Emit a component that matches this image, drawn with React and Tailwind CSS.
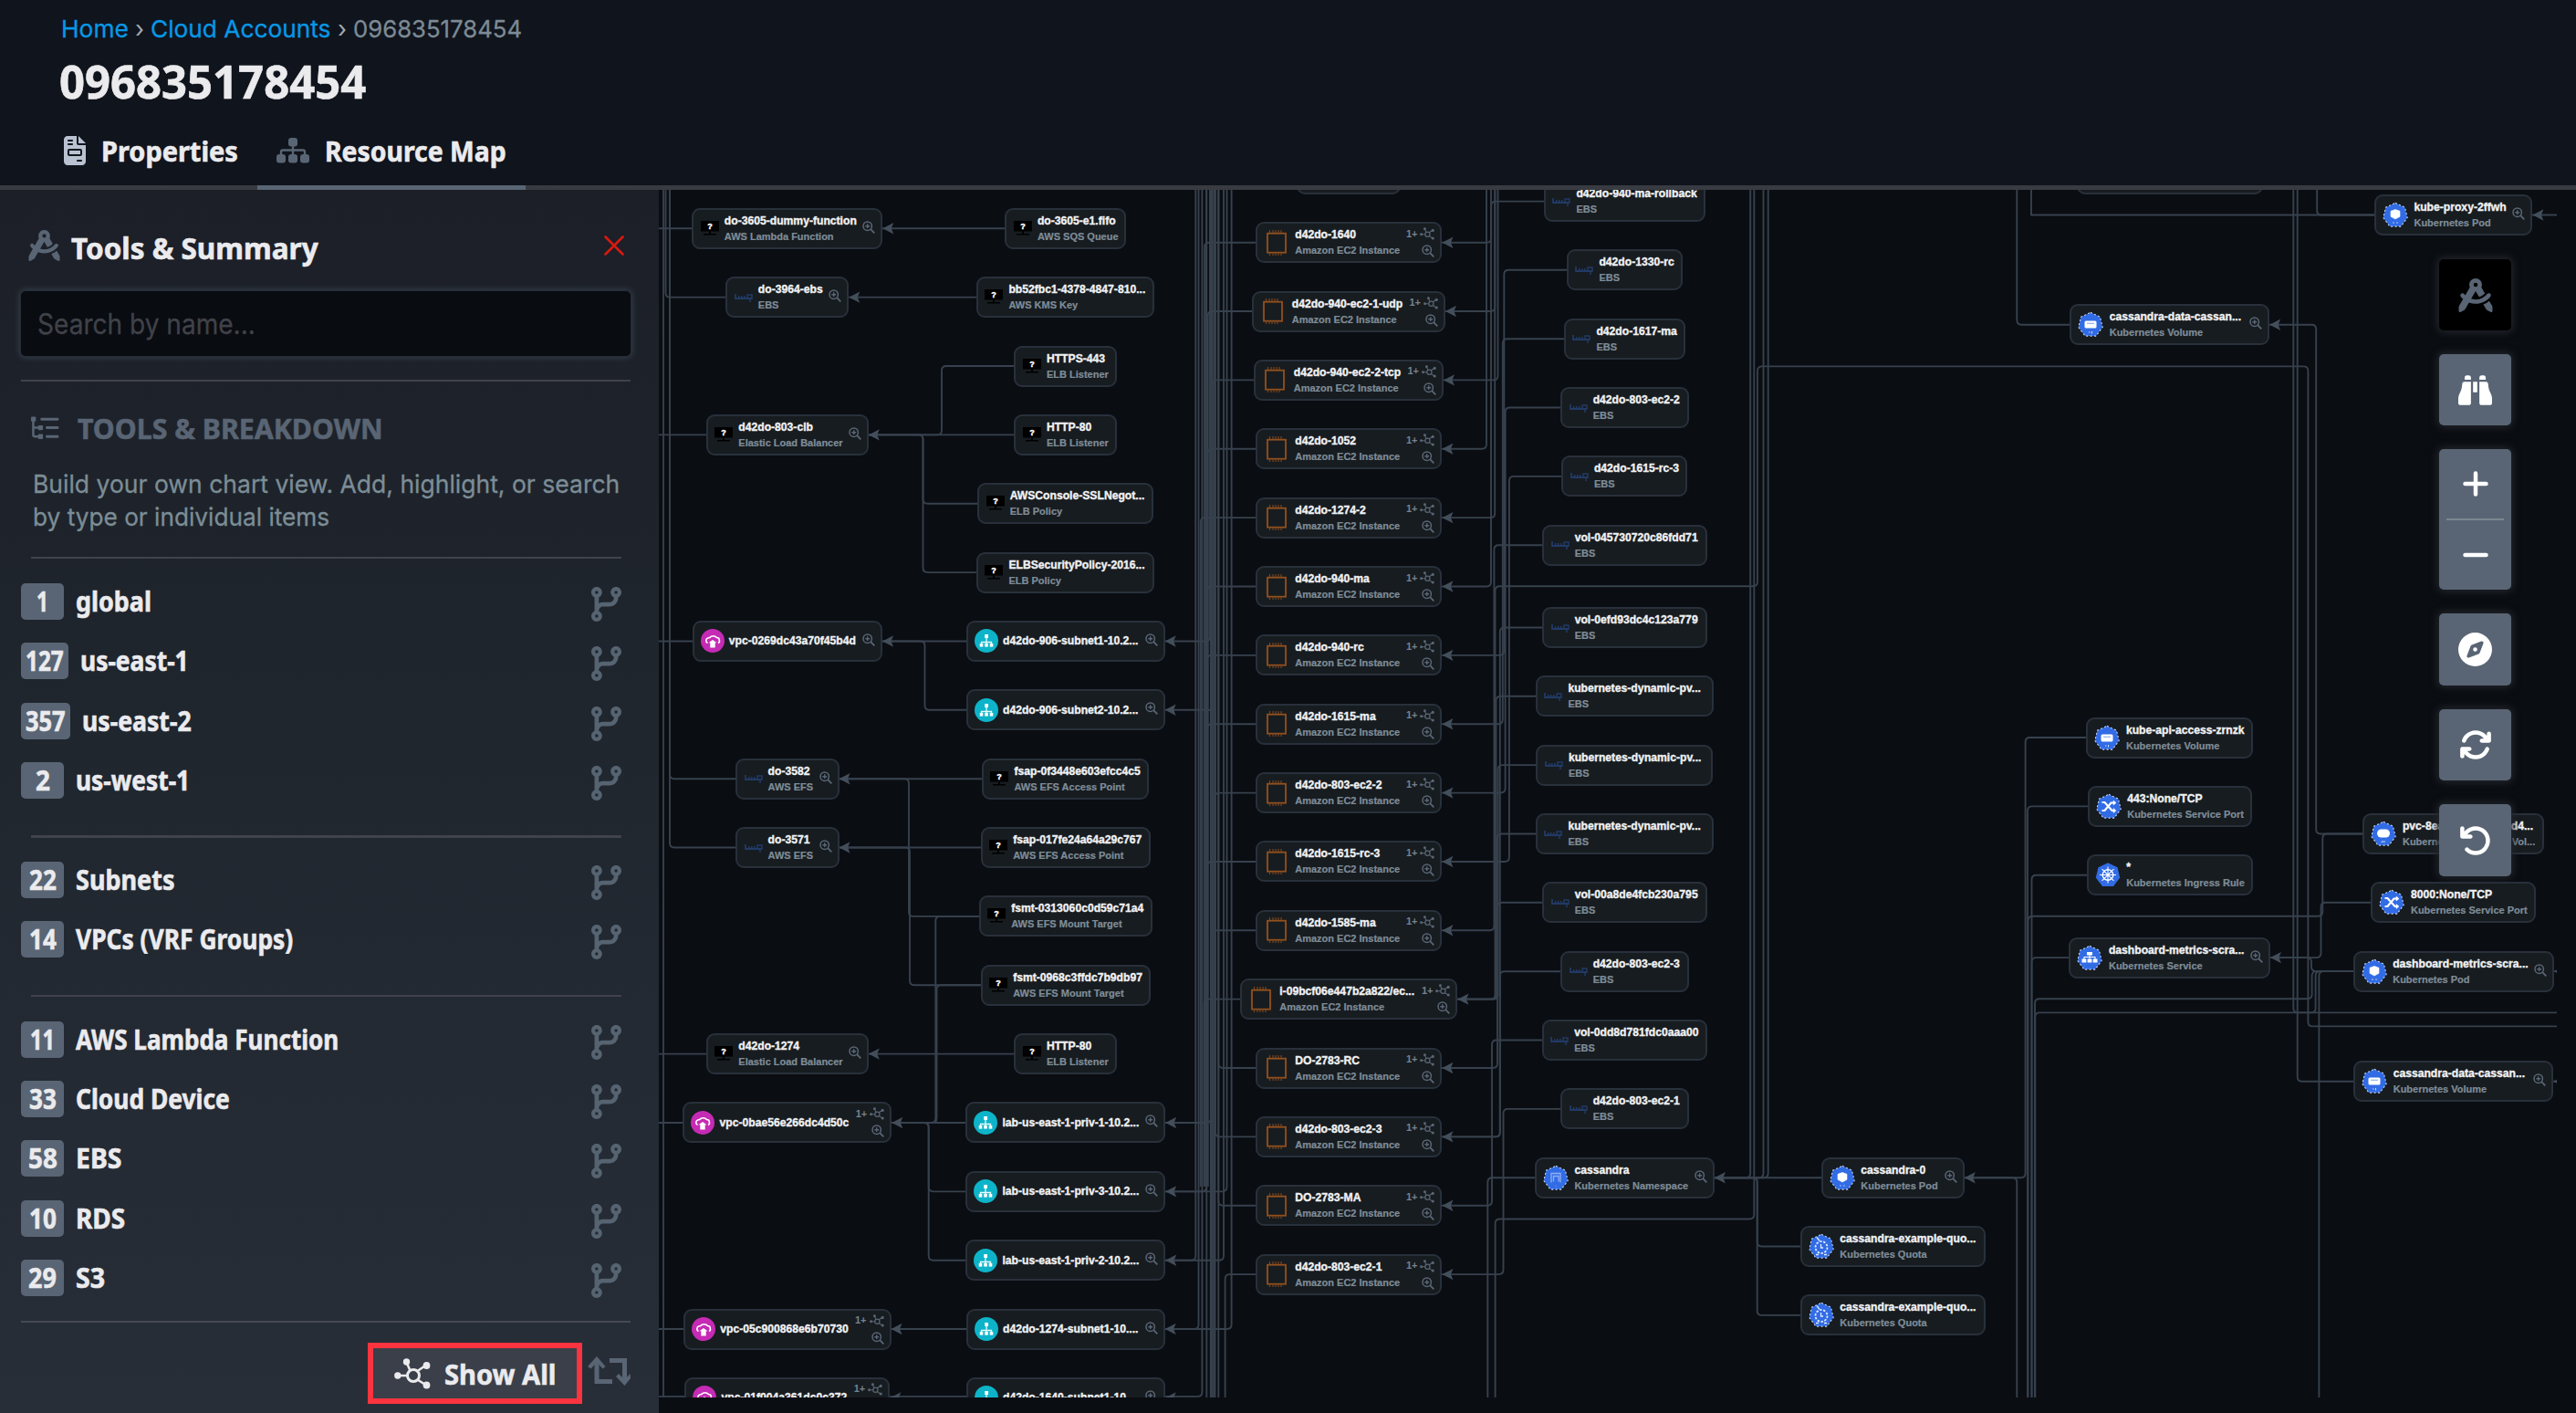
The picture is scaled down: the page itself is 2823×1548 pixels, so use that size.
import React, { useLayoutEffect, useRef } from "react";
import {
  FaCompassDrafting,
  FaBinoculars,
  FaCompass,
  FaArrowsRotate,
  FaArrowRotateLeft,
  FaCodeBranch,
  FaFileInvoice,
} from "react-icons/fa6";

/* Text squeezed or stretched horizontally to an exact width. */
function Fit({ w, className = "", children }) {
  const ref = useRef(null);
  useLayoutEffect(() => {
    const el = ref.current;
    el.style.transform = `scaleX(${w / el.offsetWidth})`;
  }, [w]);
  return (
    <span className="block shrink-0" style={{ width: w }}>
      <span ref={ref} className={`inline-block origin-left whitespace-nowrap ${className}`}>
        {children}
      </span>
    </span>
  );
}

/* ---------- panel icons ---------- */
const HubIcon = ({ className }) => (
  <svg viewBox="0 0 40 34" className={className} fill="currentColor" stroke="currentColor">
    <circle cx="21" cy="19" r="6.500" fill="none" strokeWidth="3" />
    <g strokeWidth="2.600">
      <path d="M14.500 19H4M17.500 13.500L13.500 4.500M25.500 14L35 7.500M25.500 23.500L35 29.500" />
    </g>
    <g stroke="none">
      <circle cx="3.800" cy="19" r="3.700" />
      <circle cx="13.500" cy="4" r="3.700" />
      <circle cx="35.500" cy="8" r="3.900" />
      <circle cx="35.500" cy="29.500" r="3.900" />
    </g>
  </svg>
);

const SitemapIcon = ({ className }) => (
  <svg viewBox="0 0 36 28" className={className} fill="currentColor">
    <rect x="13" y="0" width="10" height="9.500" rx="3" />
    <rect x="0" y="18" width="10" height="9.500" rx="3" />
    <rect x="13" y="18" width="10" height="9.500" rx="3" />
    <rect x="26" y="18" width="10" height="9.500" rx="3" />
    <path d="M18 8v11M5 19v-3.500a2 2 0 0 1 2-2h22a2 2 0 0 1 2 2V19" fill="none" stroke="currentColor" strokeWidth="2.400" />
  </svg>
);

const TreeListIcon = ({ className }) => (
  <svg viewBox="0 0 32 26" className={className} fill="none" stroke="currentColor" strokeWidth="2.600" strokeLinecap="round">
    <path d="M2.500 3v17.500a2 2 0 0 0 2 2H9M2.500 12.500H9" />
    <path d="M12 3h18M18 12.500h12M18 22.500h12" strokeWidth="3" />
    <g fill="currentColor" stroke="none">
      <rect x="0" y="0" width="5.500" height="5.500" rx="1" />
      <rect x="8" y="9.800" width="5.500" height="5.500" rx="1" />
      <rect x="8" y="19.800" width="5.500" height="5.500" rx="1" />
    </g>
  </svg>
);

const SwapIcon = ({ className }) => (
  <svg viewBox="0 0 47 32" className={className}>
    <path d="M10 3v24.500H27M24 4.500H40.500V28" fill="none" stroke="currentColor" strokeWidth="5" />
    <path d="M10 0L19.500 11L16.500 13.500L10 6.500L3.500 13.500L0 11zM40.500 32L31 22L34 19L40.500 25.500L46.500 19L47 24z" fill="currentColor" />
  </svg>
);

/* ---------- node icons ---------- */
const UnknownIcon = () => (
  <svg viewBox="0 0 20 17" className="h-[17px] w-[20px]">
    <rect x="0" y="0" width="20" height="11.500" fill="#000" />
    <rect x="9" y="11" width="2" height="3" fill="#000" />
    <rect x="3" y="14" width="14" height="1.500" fill="#000" />
    <text x="10" y="9" fontSize="9" fontWeight="700" fontFamily="Liberation Sans, sans-serif" textAnchor="middle" fill="#fff" stroke="#fff" strokeWidth=".4">?</text>
  </svg>
);
const VolumeIcon = () => (
  <svg viewBox="0 0 20 12" className="h-[12px] w-[20px]" fill="none" stroke="#213a66" strokeWidth="1.800">
    <path d="M1 2v5h18" />
    <path d="M4 5h9" strokeDasharray="1.500 1.500" />
    <path d="M14 6V3h5v5M17 8v3" strokeWidth="1.500" />
  </svg>
);
const ChipIcon = () => (
  <svg viewBox="0 0 24 28" className="h-[28px] w-[24px]" fill="none">
    <rect x="2" y="3.700" width="20" height="21" stroke="#92501d" strokeWidth="1.800" />
    <path d="M4.500 0v3M8 0v3M11 0v3M14 0v3M17 0v3M4.500 25.500v2.500M8 25.500v2.500M11 25.500v2.500M14 25.500v2.500M17 25.500v2.500" stroke="#7a4520" strokeWidth="1.200" />
    <path d="M0 7v15M24 7v15" stroke="#40281a" strokeWidth="1" strokeDasharray="1.500 1.500" />
  </svg>
);
const VpcIcon = () => (
  <svg viewBox="0 0 26 26" className="h-[26px] w-[26px]">
    <circle cx="13" cy="13" r="13" fill="#c52bb4" />
    <path d="M7.500 15.500a3 3 0 0 1 .2-5.500q1.200-.6 2-.4A5 5 0 0 1 17.500 9.500q3 .2 2.800 3 .8 2-1.300 3" fill="none" stroke="#fff" strokeWidth="1.600" />
    <path d="M13 12l4.500 3.200h-1.800V20.500h-5.400V15.200H8.500z" fill="#fff" />
  </svg>
);
const SubnetIcon = () => (
  <svg viewBox="0 0 26 26" className="h-[26px] w-[26px]">
    <circle cx="13" cy="13" r="13" fill="#0db4c9" />
    <path d="M13 9v6M7.500 18v-3.500h11V18M13 14v4" fill="none" stroke="#e6fbfd" strokeWidth="1.300" />
    <g fill="#fff">
      <rect x="11.200" y="6" width="3.800" height="4" />
      <rect x="5.700" y="16" width="3.600" height="3.600" />
      <rect x="11.200" y="16" width="3.600" height="3.600" />
      <rect x="16.700" y="16" width="3.600" height="3.600" />
    </g>
  </svg>
);
const GLYPHS = {
  pod: <path d="M14 8l5 1.800v6L14 18.500 9 15.800v-6zM11 22.500h2M15 22.500h2" fill="#fff" stroke="#fff" strokeWidth=".6" />,
  vol: (
    <g>
      <rect x="7.500" y="10" width="13" height="8" rx="1.500" fill="#fff" />
      <path d="M10 12.800h8" stroke="#8fb0f2" strokeWidth="1.200" />
      <path d="M12 22.500h1.500M15.500 21.500v2.500" stroke="#c9d9fa" />
    </g>
  ),
  pv: (
    <g>
      <rect x="7" y="9" width="14" height="9" rx="4.500" fill="#fff" />
      <path d="M12 23.500v-1h4" stroke="#c9d9fa" fill="none" />
    </g>
  ),
  ns: <path d="M9 19V9h10v10M11.500 18v-6h5.500v6M14 23h.5" stroke="#8fb0f2" strokeWidth="1.300" fill="none" />,
  port: (
    <g stroke="#fff" strokeWidth="2.200" fill="none">
      <path d="M6.500 9.500h3l8 9h3M6.500 18.500h3l7-8.500h4" />
      <path d="M19 7.500l3 2.500-3 2.500zM19 16l3 2.500-3 2.500z" fill="#fff" strokeWidth=".5" />
    </g>
  ),
  ingress: (
    <g stroke="#fff" strokeWidth="1.400" fill="none">
      <circle cx="14" cy="14" r="5.800" />
      <path d="M14 5v18M5 14h18M7.600 7.600l12.800 12.800M20.400 7.600L7.600 20.400" strokeWidth="1.100" />
    </g>
  ),
  svc: (
    <g fill="#fff">
      <rect x="11" y="7.500" width="6" height="3.500" />
      <rect x="5.500" y="15" width="4.800" height="4" />
      <rect x="11.600" y="15" width="4.800" height="4" />
      <rect x="17.700" y="15" width="4.800" height="4" />
      <path d="M14 10v5M8 15.500V13h12v2.500" stroke="#fff" strokeWidth="1.100" fill="none" />
    </g>
  ),
  quota: (
    <g stroke="#dfe9fd" fill="none">
      <circle cx="14" cy="15" r="6.500" strokeWidth="1.800" strokeDasharray="2.400 1.600" />
      <path d="M13.500 11.500v4h2.500M9 4l3 4M8 23h3M17 23h3" strokeWidth="1.300" />
    </g>
  ),
};
const KubeIcon = ({ kind }) => (
  <svg viewBox="0 0 28 28" className="h-[29px] w-[28px]">
    <path d="M14 .8L24.500 5.700L27.200 17L20 26.600H8L.8 17L3.500 5.700z" fill="#326ce5" />
    {kind !== "ingress" && (
      <path d="M14 .8L24.500 5.700L27.200 17L20 26.600H8L.8 17L3.500 5.700z" fill="none" stroke="#c6d5f2" strokeWidth="1.100" strokeDasharray="2 2.400" />
    )}
    {GLYPHS[kind]}
  </svg>
);
const MagIcon = () => (
  <svg viewBox="0 0 14 14" className="h-[14px] w-[14px]" fill="none" stroke="#5a6675">
    <circle cx="5.700" cy="5.700" r="4.700" strokeWidth="1.500" />
    <path d="M9.200 9.200L13.300 13.300" strokeWidth="1.800" />
    <path d="M5.700 3.300v4.800M3.300 5.700h4.800" strokeWidth="1.400" />
  </svg>
);

/* icon type -> [icon left, text left] inside the node */
const OFFSETS = { q: [9.500, 35.500], e: [9.500, 35.500], c: [11, 43.300], v: [9, 40.300], s: [9, 40.300], k: [9, 43.500] };

function NodeIcon({ type, kind }) {
  if (type === "q") return <UnknownIcon />;
  if (type === "e") return <VolumeIcon />;
  if (type === "c") return <ChipIcon />;
  if (type === "v") return <VpcIcon />;
  if (type === "s") return <SubnetIcon />;
  return <KubeIcon kind={kind} />;
}

const X0 = 722;
const Y0 = 208;
const A = 862.8;
const B = 1167.7;
const C = 1478.2;
const D = 1780.4;
const E = 2074.3;
const F = 2377.7;
const G = 2688.7;
const row = (y, k) => y + 75.36 * k;
const a = (k) => row(250.3, k);
const c = (k) => row(265.7, k);

/* [centre x, centre y, width, icon, name, type label, extras] */
const EC2 = "Amazon EC2 Instance";
const nodes = [
  [A, a(0), 209, "q", "do-3605-dummy-function", "AWS Lambda Function", "m"],
  [A, a(1), 135, "e", "do-3964-ebs", "EBS", "m"],
  [A, a(3), 178, "q", "d42do-803-clb", "Elastic Load Balancer", "m"],
  [A, a(6), 208.5, "v", "vpc-0269dc43a70f45b4d", "", "m"],
  [A, a(8), 113.5, "e", "do-3582", "AWS EFS", "m"],
  [A, a(9), 113.5, "e", "do-3571", "AWS EFS", "m"],
  [A, a(12), 178, "q", "d42do-1274", "Elastic Load Balancer", "m"],
  [A, a(13), 229, "v", "vpc-0bae56e266dc4d50c", "", "p"],
  [A, a(16), 227.5, "v", "vpc-05c900868e6b70730", "", "p"],
  [A, a(17), 225, "v", "vpc-01f004a361dc0c372", "", "p"],

  [B, a(0), 132.5, "q", "do-3605-e1.fifo", "AWS SQS Queue"],
  [B, a(1), 195.5, "q", "bb52fbc1-4378-4847-810...", "AWS KMS Key"],
  [B, a(2), 112.5, "q", "HTTPS-443", "ELB Listener"],
  [B, a(3), 112.5, "q", "HTTP-80", "ELB Listener"],
  [B, a(4), 193, "q", "AWSConsole-SSLNegot...", "ELB Policy"],
  [B, a(5), 195.5, "q", "ELBSecurityPolicy-2016...", "ELB Policy"],
  [B, a(6), 218, "s", "d42do-906-subnet1-10.2...", "", "m"],
  [B, a(7), 218, "s", "d42do-906-subnet2-10.2...", "", "m"],
  [B, a(8), 183.5, "q", "fsap-0f3448e603efcc4c5", "AWS EFS Access Point"],
  [B, a(9), 186, "q", "fsap-017fe24a64a29c767", "AWS EFS Access Point"],
  [B, a(10), 190, "q", "fsmt-0313060c0d59c71a4", "AWS EFS Mount Target"],
  [B, a(11), 186, "q", "fsmt-0968c3ffdc7b9db97", "AWS EFS Mount Target"],
  [B, a(12), 112.5, "q", "HTTP-80", "ELB Listener"],
  [B, a(13), 219, "s", "lab-us-east-1-priv-1-10.2...", "", "m"],
  [B, a(14), 219, "s", "lab-us-east-1-priv-3-10.2...", "", "m"],
  [B, a(15), 219, "s", "lab-us-east-1-priv-2-10.2...", "", "m"],
  [B, a(16), 218, "s", "d42do-1274-subnet1-10....", "", "m"],
  [B, a(17), 218, "s", "d42do-1640-subnet1-10....", "", "m"],

  [C, c(-1), 114, "", "", ""],
  [C, c(0), 204.5, "c", "d42do-1640", EC2, "p"],
  [C, c(1), 211.5, "c", "d42do-940-ec2-1-udp", EC2, "p"],
  [C, c(2), 207.5, "c", "d42do-940-ec2-2-tcp", EC2, "p"],
  [C, c(3), 204.5, "c", "d42do-1052", EC2, "p"],
  [C, c(4), 204.5, "c", "d42do-1274-2", EC2, "p"],
  [C, c(5), 204.5, "c", "d42do-940-ma", EC2, "p"],
  [C, c(6), 204.5, "c", "d42do-940-rc", EC2, "p"],
  [C, c(7), 204.5, "c", "d42do-1615-ma", EC2, "p"],
  [C, c(8), 204.5, "c", "d42do-803-ec2-2", EC2, "p"],
  [C, c(9), 204.5, "c", "d42do-1615-rc-3", EC2, "p"],
  [C, c(10), 204.5, "c", "d42do-1585-ma", EC2, "p"],
  [C, c(11), 238.5, "c", "i-09bcf06e447b2a822/ec...", EC2, "p"],
  [C, c(12), 204.5, "c", "DO-2783-RC", EC2, "p"],
  [C, c(13), 204.5, "c", "d42do-803-ec2-3", EC2, "p"],
  [C, c(14), 204.5, "c", "DO-2783-MA", EC2, "p"],
  [C, c(15), 204.5, "c", "d42do-803-ec2-1", EC2, "p"],

  [D, 220.6, 177, "e", "d42do-940-ma-rollback", "EBS"],
  [D, 295.8, 127, "e", "d42do-1330-rc", "EBS"],
  [D, 371.2, 133, "e", "d42do-1617-ma", "EBS"],
  [D, 446.5, 140.5, "e", "d42do-803-ec2-2", "EBS"],
  [D, 521.9, 138, "e", "d42do-1615-rc-3", "EBS"],
  [D, 597.2, 180.5, "e", "vol-045730720c86fdd71", "EBS"],
  [D, 687.5, 180.5, "e", "vol-0efd93dc4c123a779", "EBS"],
  [D, 762.8, 195, "e", "kubernetes-dynamic-pv...", "EBS"],
  [D, 838.1, 194, "e", "kubernetes-dynamic-pv...", "EBS"],
  [D, 913.5, 195, "e", "kubernetes-dynamic-pv...", "EBS"],
  [D, 988.8, 180.5, "e", "vol-00a8de4fcb230a795", "EBS"],
  [D, 1064.2, 140.5, "e", "d42do-803-ec2-3", "EBS"],
  [D, 1139.5, 181.5, "e", "vol-0dd8d781fdc0aaa00", "EBS"],
  [D, 1214.9, 140.5, "e", "d42do-803-ec2-1", "EBS"],
  [D, 1290.2, 197, "k", "cassandra", "Kubernetes Namespace", "m", "ns"],

  [E, 1290.2, 157, "k", "cassandra-0", "Kubernetes Pod", "m", "pod"],
  [E, 1365.5, 203, "k", "cassandra-example-quo...", "Kubernetes Quota", "", "quota"],
  [E, 1440.9, 203, "k", "cassandra-example-quo...", "Kubernetes Quota", "", "quota"],

  [F, 190.4, 204, "", "", ""],
  [F, 355.8, 219, "k", "cassandra-data-cassan...", "Kubernetes Volume", "m", "vol"],
  [F, 808, 182.500, "k", "kube-api-access-zrnzk", "Kubernetes Volume", "", "vol"],
  [F, 883.4, 180, "k", "443:None/TCP", "Kubernetes Service Port", "", "port"],
  [F, 958.7, 182, "k", "*", "Kubernetes Ingress Rule", "", "ingress"],
  [F, 1049.1, 220.5, "k", "dashboard-metrics-scra...", "Kubernetes Service", "m", "svc"],

  [G, 235.5, 173.5, "k", "kube-proxy-2ffwh", "Kubernetes Pod", "m", "pod"],
  [G, 913.5, 198.5, "k", "pvc-8ea03f1c-6b7c-4d4...", "Kubernetes Persistent Vol...", "", "pv"],
  [G, 988.8, 180.5, "k", "8000:None/TCP", "Kubernetes Service Port", "", "port"],
  [G, 1064.1, 220, "k", "dashboard-metrics-scra...", "Kubernetes Pod", "m", "pod"],
  [G, 1184.7, 219, "k", "cassandra-data-cassan...", "Kubernetes Volume", "m", "vol"],
];

function Node({ data }) {
  const [cx, cy, w, type, name, label, extra, kind] = data;
  const [iconX, textX] = OFFSETS[type] || [0, 0];
  return (
    <div
      className="absolute flex h-[45px] items-center rounded-[9px] border-2 border-[#28303b] bg-[#171c20] font-['Liberation_Sans',Arial,sans-serif] font-bold"
      style={{ left: cx - w / 2 - X0, top: cy - 22.5 - Y0, width: w }}
    >
      {type && (
        <>
          <div className="flex shrink-0 items-center" style={{ marginLeft: iconX - 2, width: textX - iconX }}>
            <NodeIcon type={type} kind={kind} />
          </div>
          <div className="flex w-0 min-w-0 grow flex-col gap-[3px] whitespace-nowrap">
            <span className="text-[12.15px] leading-[14px] text-[#f1f2f4] [-webkit-text-stroke:0.35px_#f1f2f4]">{name}</span>
            {label && <span className="text-[11px] leading-[14px] text-[#7f8d99] [-webkit-text-stroke:0.2px_#7f8d99]">{label}</span>}
          </div>
          {extra === "m" && (
            <div className="mr-[6px] mb-[3px] shrink-0">
              <MagIcon />
            </div>
          )}
          {extra === "p" && (
            <div className="mr-[6px] flex shrink-0 flex-col items-end gap-[5px]">
              <div className="flex items-center gap-[3px] text-[#75838f]">
                <span className="text-[11px] leading-[13px]">1+</span>
                <HubIcon className="h-[14px] w-[16px] text-[#5a6675]" />
              </div>
              <MagIcon />
            </div>
          )}
        </>
      )}
    </div>
  );
}

/* Rounded polyline through points given as x,y pairs. */
function poly(...p) {
  let d = `M${p[0]} ${p[1]}`;
  const n = p.length / 2;
  for (let i = 1; i < n; i++) {
    const x = p[2 * i];
    const y = p[2 * i + 1];
    if (i === n - 1) {
      d += `L${x} ${y}`;
      break;
    }
    const toward = (tx, ty) => {
      const len = Math.hypot(tx - x, ty - y) || 1;
      const r = Math.min(5, len / 2);
      return `${x + ((tx - x) / len) * r} ${y + ((ty - y) / len) * r}`;
    };
    d += `L${toward(p[2 * i - 2], p[2 * i - 1])}Q${x} ${y} ${toward(p[2 * i + 2], p[2 * i + 3])}`;
  }
  return d;
}

const T = 200;
const BOT = 1540;
const edges = [
  /* left margin trunks */
  [727, T, 727, BOT],
  [729.5, T, 729.5, a(1), A, a(1)],
  [734, T, 734, a(8), A, a(8)],
  [734, T, 734, a(9), A, a(9)],
  [X0, a(0), A, a(0)],
  [X0, a(3), A, a(3)],
  [X0, a(6), A, a(6)],
  [X0, a(12), A, a(12)],
  [X0, a(13), A, a(13)],
  [X0, a(16), A, a(16)],
  [X0, a(17) - 1.500, A, a(17) - 1.500],
  /* first to second column */
  [A, a(0), B, a(0)],
  [A, a(1), B, a(1)],
  [A, a(3), 1032, a(3), 1032, a(2), B, a(2)],
  [A, a(3), B, a(3)],
  [A, a(3), 1011.5, a(3), 1011.5, a(4), B, a(4)],
  [A, a(3), 1011.5, a(3), 1011.5, a(5), B, a(5)],
  [A, a(6), B, a(6)],
  [A, a(6), 1013.5, a(6), 1013.5, a(7), B, a(7)],
  [A, a(8), B, a(8)],
  [A, a(8), 996, a(8), 996, a(10), B, a(10)],
  [A, a(9), B, a(9)],
  [A, a(9), 997, a(9), 997, a(11), B, a(11)],
  [A, a(12), B, a(12)],
  [A, a(13), 1025.3, a(13), 1025.3, a(10), B, a(10)],
  [A, a(13), 1026.500, a(13), 1026.5, a(11), B, a(11)],
  [A, a(13), B, a(13)],
  [A, a(13), 1017.7, a(13), 1017.7, a(14), B, a(14)],
  [A, a(13), 1017.7, a(13), 1017.7, a(15), B, a(15)],
  [A, a(16), B, a(16)],
  [A, a(17) - 1.500, B, a(17) - 1.500],
  /* second to third column */
  [B, a(6), 1326, a(6), 1326, T],
  [B, a(7), 1331, a(7), 1331, T],
  [B, a(13), 1327, a(13), 1327, T],
  [B, a(14), 1322, a(14), 1322, T],
  [B, a(14), 1344.5, a(14), 1344.5, T],
  [B, a(15), 1310.3, a(15), 1310.3, T],
  [B, a(15), 1341, a(15), 1341, T],
  [B, a(16), 1313.5, a(16), 1313.5, T],
  [B, a(16), 1349.6, a(16), 1349.6, T],
  [B, a(17) - 1.500, 1317.4, a(17) - 1.500, 1317.4, T],
  [1322.3, T, 1322.3, BOT],
  [1326.8, T, 1326.8, BOT],
  [1328.8, T, 1328.8, BOT],
  [1331, T, 1331, BOT],
  [1335.3, T, 1335.3, BOT],
  [1320, 1300, 1320, c(0), C, c(0)],
  [1323.7, 1300, 1323.7, c(1), C, c(1)],
  [1328.6, BOT, 1328.6, c(2), C, c(2)],
  [1323.3, 1300, 1323.3, c(3), C, c(3)],
  [1315.7, 1300, 1315.7, c(4), C, c(4)],
  [1323, 1300, 1323, c(5), C, c(5)],
  [1323, 1300, 1323, c(6), C, c(6)],
  [1323, 1300, 1323, c(7), C, c(7)],
  [1331.5, BOT, 1331.5, c(8), C, c(8)],
  [1323, 1300, 1323, c(9), C, c(9)],
  [1327, BOT, 1327, c(10), C, c(10)],
  [1319.6, 1300, 1319.6, c(11), C, c(11)],
  [1335.3, T, 1335.3, c(12), C, c(12)],
  [1332, T, 1332, c(13), C, c(13)],
  [1335.3, T, 1335.3, c(14), C, c(14)],
  [1342.6, BOT, 1342.6, c(15), C, c(15)],
  /* third to fourth column */
  [C, c(0), 1634.2, c(0), 1634.2, 220.6, D, 220.6],
  [C, c(1), 1638.4, c(1), 1638.4, T],
  [C, c(2), 1641.5, c(2), 1641.5, T],
  [C, c(3), 1629, c(3), 1629, T],
  [C, c(4), 1638.2, c(4), 1638.2, T],
  [C, c(5), 1634, c(5), 1634, T],
  [C, c(6), 1648.3, c(6), 1648.3, 295.8, D, 295.8],
  [C, c(7), 1646.8, c(7), 1646.8, 371.2, D, 371.2],
  [C, c(8), 1649.6, c(8), 1649.6, 446.5, D, 446.5],
  [C, c(9), 1653.9, c(9), 1653.9, 521.9, D, 521.9],
  [C, c(10), 1637.4, c(10), 1637.4, 597.2, D, 597.2],
  [C, c(11), 1639.5, c(11), 1639.5, 762.8, D, 762.8],
  [C, c(11), 1641.6, c(11), 1641.6, 838.1, D, 838.1],
  [C, c(11), 1640.7, c(11), 1640.7, 913.5, D, 913.5],
  [C, c(11), 1638.5, c(11), 1638.5, 642.2, 1926, 642.2, 1926, 401.4, 2529.4, 401.4, 2529.4, 1124.4, 2810, 1124.4],
  [C, c(12), 1641, c(12), 1641, 988.8, D, 988.8],
  [C, c(13), 1643.8, c(13), 1643.8, 687.5, D, 687.5],
  [C, c(13), 1643.8, c(13), 1643.8, 1064.2, D, 1064.2],
  [C, c(14), 1635, c(14), 1635, 1139.5, D, 1139.5],
  [C, c(15), 1647.5, c(15), 1647.5, 1214.9, D, 1214.9],
  [1630.3, BOT, 1630.3, 1290.2, D, 1290.2],
  [1638.6, BOT, 1638.6, 1335.5, 1922.3, 1335.5, 1922.3, T],
  /* fourth to fifth column */
  [D, 1290.2, 1918.2, 1290.2, 1918.2, T],
  [D, 1290.2, 1932.5, 1290.2, 1932.5, T],
  [D, 1290.2, 1937.7, 1290.2, 1937.7, T],
  [D, 1290.2, E, 1290.2],
  [D, 1290.2, 1925.7, 1290.2, 1925.7, 1365.5, E, 1365.5],
  [D, 1290.2, 1925.7, 1290.2, 1925.7, 1440.9, E, 1440.9],
  /* fifth to sixth column */
  [E, 1290.2, 2210.3, 1290.2, 2210.3, BOT],
  [E, 1290.2, 2219.6, 1290.2, 2219.6, 808, F, 808],
  [2222, BOT, 2222, 883.4, F, 883.4],
  [2222.5, BOT, 2222.5, 1003.7, 2545.3, 1003.7, 2545.3, 913.5, G, 913.5],
  [2226.5, BOT, 2226.5, 958.7, F, 958.7],
  [2226.5, BOT, 2226.5, 1049.1, F, 1049.1],
  [2230, BOT, 2230, 1094.3, 2533.6, 1094.3, 2533.6, 1064.1, G, 1064.1],
  [2230.3, BOT, 2230.3, 1109.4, 2537.6, 1109.4, 2537.6, 1064.1, G, 1064.1],
  [2210.3, T, 2210.3, 355.8, F, 355.8],
  [2226, T, 2226, 242, 2226, 242.300, G, 242.300],
  [2539.2, T, 2539.2, 242.300, G, 242.300],
  /* sixth to seventh column */
  [2513.3, T, 2513.3, 1109.4, 2810, 1109.4],
  [2517.7, T, 2517.7, 1184.7, G, 1184.7],
  [F, 355.8, 2538.2, 355.8, 2538.2, 913.5, G, 913.5],
  [F, 1049.1, 2543.5, 1049.1, 2543.5, 988.8, G, 988.8],
  [F, 1049.1, 2533, 1049.1, 2533, 1064.1, G, 1064.1],
  [2541.4, BOT, 2541.4, 1064.1, G, 1064.1],
  [G, 1064.1, 2810, 1064.1],
  [G, 1184.7, 2810, 1184.7],
  [G, 235.5, 2810, 235.5],
].map((e) => e.map((v) => (v === 242.3 || v === 242 ? 235.5 : v)));

/* Nodes that receive an arrow on their right-hand side. */
const arrows = nodes.filter((n) => n[6] === "m" || n[6] === "p").map(([cx, cy, w]) => [cx + w / 2, cy]);

function ResourceMap() {
  return (
    <div className="relative h-[1323px] w-[2080px] shrink-0 overflow-hidden">
      <svg viewBox="722 208 2080 1323" className="absolute inset-0 h-[1323px] w-[2080px]">
        <g fill="none" stroke="#37414d" strokeWidth="1.900">
          {edges.map((e, i) => (
            <path key={i} d={poly(...e)} />
          ))}
        </g>
        <g fill="#434e5b">
          {arrows.map(([x, y], i) => (
            <path key={i} d={`M${x} ${y}l12 -6.200l-2.500 6.200l2.500 6.200z`} />
          ))}
        </g>
      </svg>
      {nodes.map((n, i) => (
        <Node key={i} data={n} />
      ))}
    </div>
  );
}

/* ---------- side panel ---------- */
const HEAD = "font-['Noto_Sans','Open_Sans',sans-serif] font-bold [-webkit-text-stroke:0.6px_currentColor]";
const BODY = "font-['Inter','Open_Sans',sans-serif] font-normal [-webkit-text-stroke:0.3px_currentColor]";

function Row({ count, countW, label, labelW, badgeW = 47 }) {
  return (
    <div className="flex h-[65.3px] items-start">
      <div className="flex h-[40px] shrink-0 items-center justify-center rounded-[5px] bg-[#596574]" style={{ width: badgeW }}>
        <Fit w={countW} className={`${HEAD} text-[29.500px] leading-[40px] text-[#ebebee]`}>{count}</Fit>
      </div>
      <div className="ml-[13px] grow">
        <Fit w={labelW} className={`${HEAD} text-[29.500px] leading-[40px] text-[#ebebee]`}>{label}</Fit>
      </div>
      <FaCodeBranch className="mt-[4px] mr-[10px] h-[38px] w-[33px] text-[#566371]" preserveAspectRatio="none" />
    </div>
  );
}

function SidePanel() {
  return (
    <aside className="relative flex h-[1340px] w-[722px] shrink-0 flex-col bg-linear-to-b from-[#1c1f27] via-[#20272f] to-[#282e38] pr-[31px] pl-[23px]">
      <div className="flex h-[111px] items-center pt-[11px]">
        <FaCompassDrafting className="ml-[8px] h-[34px] w-[35px] text-[#596574]" />
        <div className="ml-[12px] grow pt-[5px]">
          <Fit w={271} className={`${HEAD} text-[33px] leading-[44px] text-[#ebebee]`}>Tools &amp; Summary</Fit>
        </div>
        <svg viewBox="0 0 22 22" className="mr-[7px] h-[22px] w-[22px]" stroke="#d71a10" strokeWidth="2.600" strokeLinecap="round">
          <path d="M1.500 1.500L20.500 20.500M20.500 1.500L1.500 20.500" />
        </svg>
      </div>
      <div className="flex h-[71px] items-center rounded-[5px] bg-[#090c11] pl-[18px] shadow-[0_0_0_1px_#262b33,0_0_6px_2px_#34404c]">
        <Fit w={239} className={`${BODY} text-[31px] leading-[44px] text-[#404249]`}>Search by name...</Fit>
      </div>
      <div className="mt-[26px] h-[2px] bg-[#40434c]" />
      <div className="mt-[31px] flex h-[40px] items-center">
        <TreeListIcon className="ml-[11px] h-[26px] w-[31px] text-[#596574]" />
        <div className="ml-[20px]">
          <Fit w={335} className={`${HEAD} text-[31px] leading-[40px] text-[#596574]`}>TOOLS &amp; BREAKDOWN</Fit>
        </div>
      </div>
      <div className="mt-[23px] ml-[13px] h-[72px]">
        <Fit w={643} className={`${BODY} text-[27.500px] leading-[36px] text-[#7c8d96]`}>Build your own chart view. Add, highlight, or search</Fit>
        <Fit w={325} className={`${BODY} text-[27.500px] leading-[36px] text-[#7c8d96]`}>by type or individual items</Fit>
      </div>
      <div className="mt-[26px] mr-[10px] ml-[11px] h-[2px] bg-[#40434c]" />
      <div className="mt-[27px]">
        <Row count="1" countW={13} label="global" labelW={83} />
        <Row count="127" countW={42} badgeW={52} label="us-east-1" labelW={119} />
        <Row count="357" countW={44} badgeW={54} label="us-east-2" labelW={120} />
        <Row count="2" countW={16} label="us-west-1" labelW={125} />
      </div>
      <div className="mt-[15px] mr-[10px] ml-[11px] h-[3px] bg-[#40434c]" />
      <div className="mt-[26px]">
        <Row count="22" countW={30} label="Subnets" labelW={108} />
        <Row count="14" countW={30} label="VPCs (VRF Groups)" labelW={238} />
      </div>
      <div className="mt-[15px] mr-[10px] ml-[11px] h-[2px] bg-[#40434c]" />
      <div className="mt-[27px]">
        <Row count="11" countW={27} label="AWS Lambda Function" labelW={288} />
        <Row count="33" countW={30} label="Cloud Device" labelW={169} />
        <Row count="58" countW={32} label="EBS" labelW={50} />
        <Row count="10" countW={30} label="RDS" labelW={54} />
        <Row count="29" countW={31} label="S3" labelW={32} />
      </div>
      <div className="mt-[2px] h-[2px] bg-[#464952]" />
      <div className="mt-[22px] flex items-center justify-end">
        <div className="flex h-[67px] w-[235px] items-center border-6 border-[#fb343f] bg-[#3a3f49] pl-[23px]">
          <HubIcon className="h-[34px] w-[40px] text-[#ebebee]" />
          <div className="ml-[15px]">
            <Fit w={123} className={`${HEAD} text-[31px] leading-[44px] text-[#ebebee]`}>Show All</Fit>
          </div>
        </div>
        <SwapIcon className="mb-[6px] ml-[6px] h-[32px] w-[47px] text-[#596574]" />
      </div>
    </aside>
  );
}

/* ---------- floating toolbar ---------- */
const BTN = "flex w-[79px] items-center justify-center rounded-[5px] bg-[#596574] text-white shadow-[0_0_8px_2px_#24272c]";

function Toolbar() {
  return (
    <div className="absolute top-[76px] right-[71px] flex flex-col gap-[26px]">
      <div className="flex h-[78px] w-[79px] items-center justify-center rounded-[5px] bg-black text-[#596574] shadow-[0_0_8px_2px_#24272c]">
        <FaCompassDrafting className="h-[37px] w-[38px]" />
      </div>
      <div className={`${BTN} h-[78px]`}>
        <FaBinoculars className="h-[37px] w-[37px]" />
      </div>
      <div className={`${BTN} h-[154px] flex-col`}>
        <div className="flex grow items-center">
          <svg viewBox="0 0 28 28" className="h-[28px] w-[28px]" stroke="#fff" strokeWidth="4.500" strokeLinecap="round">
            <path d="M14 2.500v23M2.500 14h23" />
          </svg>
        </div>
        <div className="h-[2px] w-[63px] bg-[#7b868f]" />
        <div className="flex grow items-center">
          <svg viewBox="0 0 28 28" className="h-[28px] w-[28px]" stroke="#fff" strokeWidth="4.500" strokeLinecap="round">
            <path d="M2.500 14h23" />
          </svg>
        </div>
      </div>
      <div className={`${BTN} h-[79px]`}>
        <FaCompass className="h-[37px] w-[37px]" />
      </div>
      <div className={`${BTN} h-[78px]`}>
        <FaArrowsRotate className="h-[36px] w-[36px]" />
      </div>
      <div className={`${BTN} h-[79px]`}>
        <FaArrowRotateLeft className="h-[36px] w-[36px]" />
      </div>
    </div>
  );
}

export default function App() {
  return (
    <div className="flex h-[1548px] w-[2823px] flex-col overflow-hidden bg-[#0a0d12]">
      <header className="flex h-[208px] shrink-0 flex-col bg-[#10141c]">
        <nav className="flex h-[36px] items-center pt-[27px] pl-[67px]">
          <Fit w={74} className={`${BODY} text-[26px] leading-[36px] text-[#0798e6]`}>Home</Fit>
          <span className="ml-[3px] w-[21px] pr-[3px] text-center text-[26px] leading-[36px] text-[#a3a9b0] font-['Inter',sans-serif]">›</span>
          <Fit w={197} className={`${BODY} text-[26px] leading-[36px] text-[#0798e6]`}>Cloud Accounts</Fit>
          <span className="ml-[3px] w-[22px] pr-[2px] text-center text-[26px] leading-[36px] text-[#a3a9b0] font-['Inter',sans-serif]">›</span>
          <Fit w={185} className={`${BODY} text-[26px] leading-[36px] text-[#7c8b96]`}>096835178454</Fit>
        </nav>
        <h1 className="mt-[20px] h-[66px] pl-[65px]">
          <Fit w={336} className={`${HEAD} text-[50px] leading-[66px] text-[#ebebee]`}>096835178454</Fit>
        </h1>
        <div className="flex h-[81px] items-center pt-[5px]">
          <FaFileInvoice className="ml-[70px] h-[32px] w-[24px] text-[#b9c2d1]" />
          <div className="ml-[17px] pt-[2px]">
            <Fit w={150} className={`${HEAD} text-[29.500px] leading-[40px] text-[#ebebee]`}>Properties</Fit>
          </div>
          <SitemapIcon className="ml-[42px] h-[28px] w-[36px] text-[#596574]" />
          <div className="ml-[17px] pt-[2px]">
            <Fit w={199} className={`${HEAD} text-[29.500px] leading-[40px] text-[#ebebee]`}>Resource Map</Fit>
          </div>
        </div>
        <div className="h-[5px] bg-[#393b42] pl-[282px]">
          <div className="h-[5px] w-[294px] bg-[#596574]" />
        </div>
      </header>
      <main className="relative flex h-[1340px]">
        <SidePanel />
        <ResourceMap />
        <Toolbar />
      </main>
    </div>
  );
}
